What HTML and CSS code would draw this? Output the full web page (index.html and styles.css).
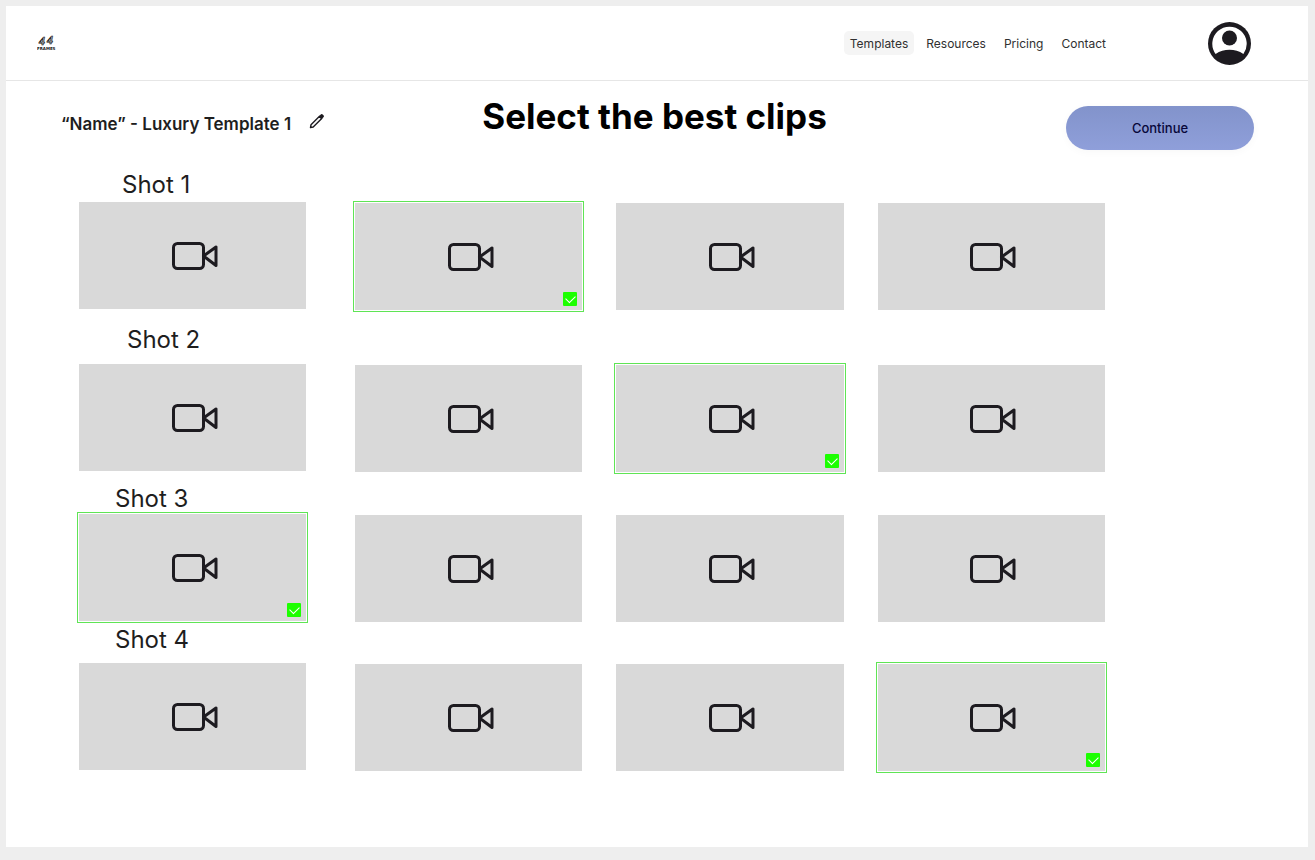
FILE: index.html
```html
<!DOCTYPE html>
<html lang="en">
<head>
<meta charset="utf-8">
<meta name="viewport" content="width=device-width, initial-scale=1">
<title>44 Frames - Select the best clips</title>
<link rel="stylesheet" href="styles.css">
</head>
<body>
<svg class="sprite" aria-hidden="true">
  <symbol id="camera" viewBox="0 0 46 28">
    <rect x="1.500" y="1.500" width="30" height="25" rx="4"/>
    <path d="M31.500 14 44 5v18.500z"/>
  </symbol>
</svg>
<div class="panel">
  <header class="header">
    <a class="logo" href="#" aria-label="44 Frames">
      <svg width="20" height="18" viewBox="0 0 20 18">
        <text class="logo-number" x="2 10" y="11 9.500">44</text>
        <text class="logo-name" x="0" y="16">FRAMES</text>
      </svg>
    </a>
    <nav class="nav">
      <a class="nav-link nav-link-active" href="#">Templates</a>
      <a class="nav-link" href="#">Resources</a>
      <a class="nav-link" href="#">Pricing</a>
      <a class="nav-link" href="#">Contact</a>
    </nav>
    <button class="account" type="button" aria-label="Account">
      <svg width="43" height="43" viewBox="0 0 43 43">
        <circle cx="21.500" cy="21.500" r="21.500" fill="#1d1b20"/>
        <path d="M7.600 32A17.200 17.200 0 1 1 35.400 32Q29 27.800 21.500 27.800T7.600 32z" fill="#fff"/>
        <circle cx="21.500" cy="16" r="7.500" fill="#1d1b20"/>
      </svg>
    </button>
  </header>
  <main>
    <div class="toolbar">
      <div class="project">
        <h2 class="project-name">“Name” - Luxury Template 1</h2>
        <button class="edit" type="button" aria-label="Edit name">
          <svg width="16" height="16" viewBox="0 0 16 16"><path d="M1.500 14.500 2 11.800 10.500 3.300 12.700 5.500 4.200 14z" fill="none" stroke="#1d1b20" stroke-width="1.400" stroke-linejoin="round"/><path d="M9.800 3.500 12 1.300q.7-.6 1.400 0l1.300 1.300q.6.700 0 1.400L12.500 6.200z" fill="#1d1b20"/></svg>
        </button>
      </div>
      <h1 class="heading">Select the best clips</h1>
      <button class="continue" type="button">Continue</button>
    </div>
    <div class="shots">
      <section class="shot">
        <h3 class="shot-name shot-name-1">Shot 1</h3>
        <div class="clips">
          <label class="clip"><input type="checkbox" aria-label="Shot 1, clip 1"><svg class="camera"><use href="#camera"/></svg></label>
          <div class="takes">
            <label class="clip"><input type="checkbox" aria-label="Shot 1, clip 2" checked><svg class="camera"><use href="#camera"/></svg></label>
            <label class="clip"><input type="checkbox" aria-label="Shot 1, clip 3"><svg class="camera"><use href="#camera"/></svg></label>
            <label class="clip"><input type="checkbox" aria-label="Shot 1, clip 4"><svg class="camera"><use href="#camera"/></svg></label>
          </div>
        </div>
      </section>
      <section class="shot shot-2">
        <h3 class="shot-name shot-name-2">Shot 2</h3>
        <div class="clips">
          <label class="clip"><input type="checkbox" aria-label="Shot 2, clip 1"><svg class="camera"><use href="#camera"/></svg></label>
          <div class="takes">
            <label class="clip"><input type="checkbox" aria-label="Shot 2, clip 2"><svg class="camera"><use href="#camera"/></svg></label>
            <label class="clip"><input type="checkbox" aria-label="Shot 2, clip 3" checked><svg class="camera"><use href="#camera"/></svg></label>
            <label class="clip"><input type="checkbox" aria-label="Shot 2, clip 4"><svg class="camera"><use href="#camera"/></svg></label>
          </div>
        </div>
      </section>
      <section class="shot shot-3">
        <h3 class="shot-name shot-name-3">Shot 3</h3>
        <div class="clips">
          <label class="clip"><input type="checkbox" aria-label="Shot 3, clip 1" checked><svg class="camera"><use href="#camera"/></svg></label>
          <div class="takes">
            <label class="clip"><input type="checkbox" aria-label="Shot 3, clip 2"><svg class="camera"><use href="#camera"/></svg></label>
            <label class="clip"><input type="checkbox" aria-label="Shot 3, clip 3"><svg class="camera"><use href="#camera"/></svg></label>
            <label class="clip"><input type="checkbox" aria-label="Shot 3, clip 4"><svg class="camera"><use href="#camera"/></svg></label>
          </div>
        </div>
      </section>
      <section class="shot shot-4">
        <h3 class="shot-name shot-name-4">Shot 4</h3>
        <div class="clips">
          <label class="clip"><input type="checkbox" aria-label="Shot 4, clip 1"><svg class="camera"><use href="#camera"/></svg></label>
          <div class="takes">
            <label class="clip"><input type="checkbox" aria-label="Shot 4, clip 2"><svg class="camera"><use href="#camera"/></svg></label>
            <label class="clip"><input type="checkbox" aria-label="Shot 4, clip 3"><svg class="camera"><use href="#camera"/></svg></label>
            <label class="clip"><input type="checkbox" aria-label="Shot 4, clip 4" checked><svg class="camera"><use href="#camera"/></svg></label>
          </div>
        </div>
      </section>
    </div>
  </main>
</div>
</body>
</html>
```
FILE: styles.css
```css
* {
  box-sizing: border-box;
}

body {
  margin: 0;
  min-height: 100vh;
  padding: 6px 7px 13px 6px;
  display: flex;
  background: #eeeeee;
  color: #1e1e1e;
  font-family: Inter, "Liberation Sans", sans-serif;
}

h1, h2, h3 {
  margin: 0;
}

button {
  padding: 0;
  border: 0;
  background: none;
  font: inherit;
  color: inherit;
  cursor: pointer;
}

svg {
  display: block;
}

.sprite {
  position: absolute;
  width: 0;
  height: 0;
}

.panel {
  flex: 1;
  background: #ffffff;
}

/* Header */
.header {
  display: flex;
  align-items: center;
  height: 75px;
  padding: 0 57px 0 31px;
  border-bottom: 1px solid #e6e6e6;
}

.logo-number {
  font: italic bold 12px "Liberation Serif", serif;
  fill: #bbbbbb;
  stroke: #111111;
  stroke-width: 0.6;
}

.logo-name {
  font: bold 4px "DejaVu Sans", sans-serif;
  fill: #111111;
}

.nav {
  display: flex;
  gap: 6px;
  margin-left: auto;
  margin-right: 96px;
}

.nav-link {
  padding: 1px 6px 0;
  border-radius: 5px;
  color: #303030;
  font-size: 12px;
  line-height: 23px;
  text-decoration: none;
}

.nav-link-active {
  background: #f5f5f5;
}

/* Toolbar */
.toolbar {
  display: grid;
  grid-template-columns: 1fr auto 1fr;
  padding: 11px 54px 0 55px;
}

.project {
  display: flex;
  align-items: flex-start;
  gap: 18px;
  padding-top: 21px;
}

.project-name {
  font-size: 17px;
  font-weight: 600;
  line-height: 22px;
}

.heading {
  margin-right: 6px;
  color: #000000;
  font-size: 35px;
  font-weight: 700;
  line-height: 48px;
}

.continue {
  justify-self: end;
  width: 188px;
  height: 44px;
  margin-top: 14px;
  border-radius: 22px;
  background: linear-gradient(#8293cb, #8f9fda);
  box-shadow: 0 2px 8px rgba(0, 0, 0, 0.03);
  color: #07073a;
  font-size: 13px;
  font-weight: 500;
}

/* Shots */
.shots {
  padding: 21px 203px 40px 73px;
}

.shot-2 {
  padding-top: 16px;
}

.shot-3 {
  padding-top: 13px;
}

.shot-4 {
  padding-top: 4px;
}

.shot-name {
  font-size: 24px;
  font-weight: 400;
  line-height: 28px;
}

.shot-name-1 {
  padding: 0 0 3px 43px;
}

.shot-name-2 {
  padding: 0 0 10px 48px;
}

.shot-name-3 {
  padding: 0 0 1px 36px;
}

.shot-name-4 {
  padding: 0 0 9px 36px;
}

.clips {
  display: grid;
  grid-template-columns: 227fr 750fr;
  gap: 49px;
}

.takes {
  display: grid;
  grid-template-columns: repeat(3, 1fr);
  gap: 34px;
  padding-top: 1px;
}

.clip {
  position: relative;
  display: flex;
  align-items: center;
  justify-content: center;
  height: 107px;
  background: #d9d9d9;
  cursor: pointer;
}

.clip:has(input:checked)::after {
  content: "";
  position: absolute;
  inset: -2px;
  border: 1px solid #5fe455;
}

.clip input {
  position: absolute;
  right: 5px;
  bottom: 4px;
  width: 14px;
  height: 14px;
  margin: 0;
  appearance: none;
  background: #1cff00;
  border-radius: 1px;
  opacity: 0;
}

.clip input:checked {
  opacity: 1;
}

.clip input::after {
  content: "";
  position: absolute;
  left: 3px;
  top: 3px;
  width: 8px;
  height: 5px;
  border: solid #ffffff;
  border-width: 0 0 1px 1px;
  transform: rotate(-45deg);
}

.camera {
  width: 46px;
  height: 28px;
  margin-left: 4px;
  fill: none;
  stroke: #1d1b20;
  stroke-width: 3;
  stroke-linejoin: round;
}
```
